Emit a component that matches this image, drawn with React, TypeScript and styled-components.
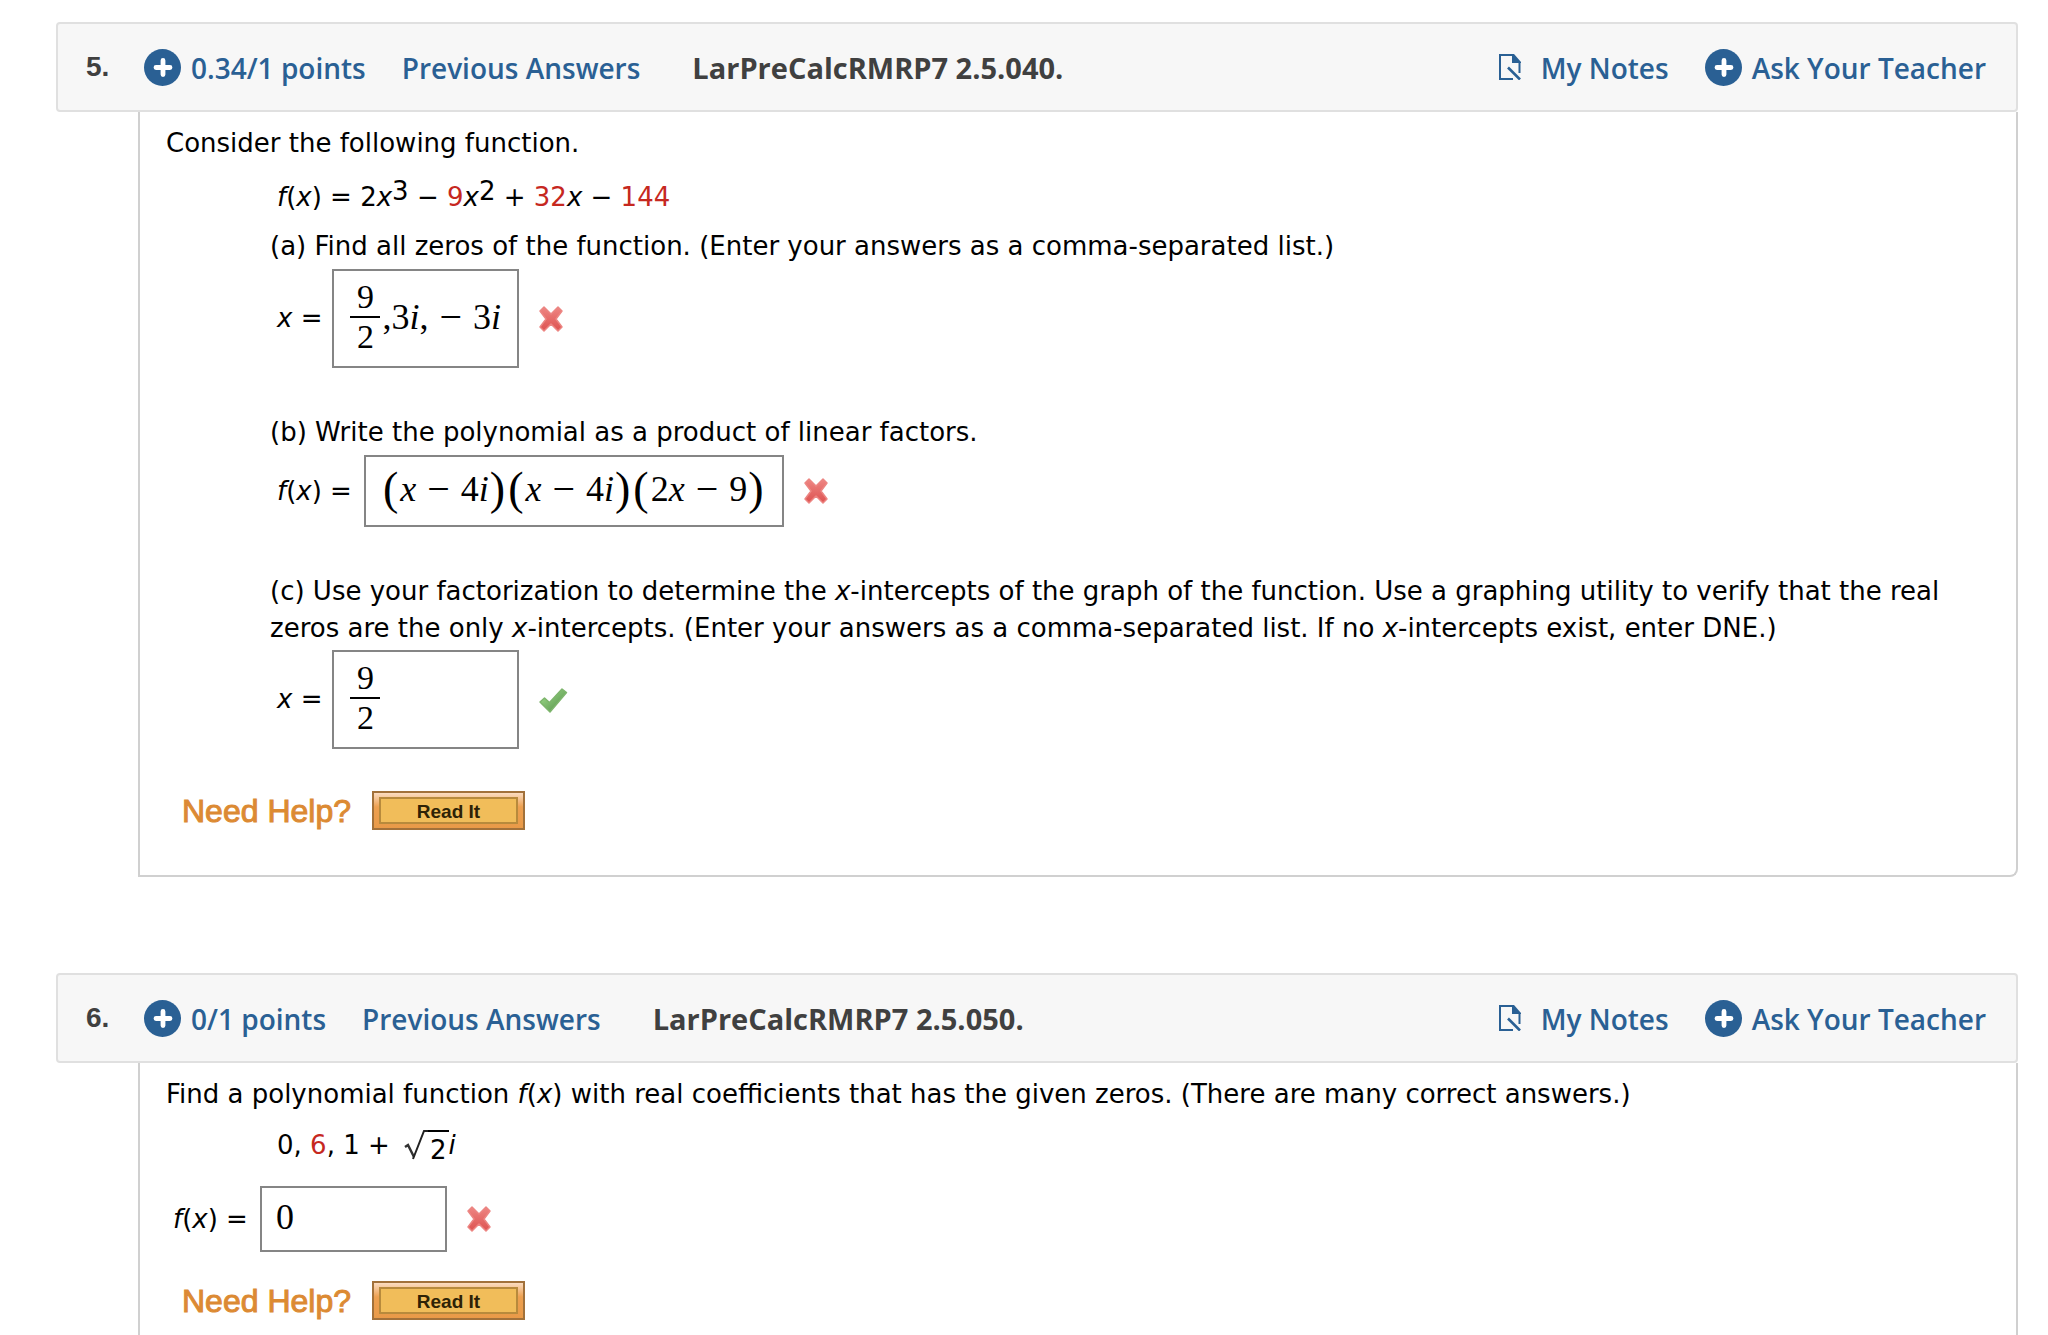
import React from "react";
import styled, { createGlobalStyle } from "styled-components";

const GlobalStyle = createGlobalStyle`
  *, *::before, *::after { box-sizing: border-box; }
  body { margin: 0; background: #fff; color: #000; }
`;

const verdana = `Verdana, "DejaVu Sans", sans-serif`;
const openSans = `"Open Sans", sans-serif`;
const arial = `"Liberation Sans", Arial, sans-serif`;
const times = `"Liberation Serif", "Times New Roman", serif`;

const Page = styled.main`
  display: flex;
  flex-direction: column;
  gap: 96px;
  padding: 22px 30px 40px 56px;
`;

const Question = styled.section`
  display: flex;
  flex-direction: column;
`;

const Header = styled.header`
  display: flex;
  align-items: center;
  height: 90px;
  padding: 0 30px 0 28px;
  border: 2px solid #e0e0e0;
  border-radius: 4px;
  background: #f7f7f7;
  font: 600 28px/40px ${openSans};
  white-space: nowrap;
`;

const Number = styled.span`
  width: 58px;
  font: 700 28px/40px ${arial};
  color: #404040;
`;

const HeaderLink = styled.a<{ $gap?: number }>`
  display: flex;
  align-items: center;
  gap: ${(p) => p.$gap ?? 10}px;
  margin-right: 36px;
  color: #2a6094;
  text-decoration: none;
  &:last-child { margin-right: 0; }
`;

const LinkText = styled.span`
  padding-top: 2px;
`;

const Source = styled.h2`
  flex: 1;
  margin: 0 0 0 16px;
  padding-top: 2px;
  font: 700 29px/40px ${openSans};
  color: #404040;
`;

const Body = styled.div`
  margin-left: 82px;
  padding: 13px 40px 45px 26px;
  border: solid #d0d0d0;
  border-width: 0 2px 2px;
  border-radius: 0 0 8px 0;
  font: 26px/37px ${verdana};
`;

const Text = styled.p<{ $top?: number }>`
  margin: ${(p) => p.$top ?? 0}px 0 0;
`;

const Indent = styled.div`
  padding-left: 104px;
`;

const Formula = styled.p<{ $top: number }>`
  height: 37px;
  margin: ${(p) => p.$top}px 0 0 7px;
  sup { font-size: 26px; line-height: 0; vertical-align: 6px; }
`;

const Red = styled.span`
  color: #c6281f;
`;

const AnswerRow = styled.div<{ $top: number }>`
  display: flex;
  align-items: center;
  margin: ${(p) => p.$top}px 0 0 7px;
`;

const AnswerLabel = styled.label<{ $gap?: number }>`
  margin-right: ${(p) => p.$gap ?? 10}px;
`;

const mathBox = `
  min-width: 187px;
  border: 2px solid #858585;
  background: #fff;
  color: #000;
  font: 36px/44px ${times};
`;

const MathBox = styled.div<{ $height: number }>`
  ${mathBox}
  display: flex;
  align-items: center;
  height: ${(p) => p.$height}px;
  padding: 0 16px 4px;
`;

const MathInput = styled.input`
  ${mathBox}
  width: 187px;
  height: 66px;
  padding: 0 14px 4px;
`;

const Mark = styled.svg`
  margin-left: 18px;
  flex: none;
`;

const Fraction = styled.span`
  display: flex;
  flex-direction: column;
  width: 30px;
  margin-right: 2px;
  text-align: center;
  font-size: 34px;
  line-height: 38px;
`;

const Numerator = styled.span`
  border-bottom: 2px solid #000;
`;

const MathLine = styled.span`
  display: flex;
  align-items: center;
`;

const Minus = styled.span`
  margin: 0 11px;
  font-size: 40px;
`;

const Paren = styled.span`
  margin: 0 2px 0 1px;
  font-size: 46px;
`;

const Root = styled.span`
  display: inline-flex;
  align-items: flex-start;
  margin-left: 6px;
  vertical-align: -14px;
`;

const Radicand = styled.span`
  padding: 0 2px;
  border-top: 2px solid #000;
  line-height: 36px;
`;

const HelpRow = styled.div<{ $top: number }>`
  display: flex;
  align-items: center;
  gap: 18px;
  margin: ${(p) => p.$top}px 0 0 16px;
`;

const HelpTitle = styled.span`
  width: 172px;
  color: #dc8a33;
  font: 32px/36px ${arial};
  white-space: nowrap;
  -webkit-text-stroke: 1px #dc8a33;
`;

const ReadButton = styled.button`
  width: 153px;
  height: 39px;
  padding: 4px 5px;
  border: 2px solid #a2713a;
  background: linear-gradient(#fbdcc0, #eda050 40%, #e99a48);
`;

const ReadFace = styled.span`
  display: block;
  padding-top: 2px;
  border: 2px solid #b88a3c;
  background: #f1bd5a;
  color: #2e2206;
  font: 700 19px/21px ${arial};
`;

const PlusIcon = () => (
  <svg width="37" height="37" viewBox="0 0 37 37" aria-hidden="true">
    <circle cx="18.5" cy="18.5" r="18.5" fill="#2a6094" />
    <path d="M19 11.5v14M12 18.5h14" stroke="#fff" strokeWidth="4.8" strokeLinecap="round" />
  </svg>
);

const NotesIcon = () => (
  <svg width="22" height="26" viewBox="0 0 22 26" aria-hidden="true">
    <path d="M14 25H1V1h13M20.5 8v11" fill="none" stroke="#2a6094" strokeWidth="2" />
    <path d="M13 0h2l7 8v1h-9z" fill="#2a6094" />
    <path d="M9 13.5l12 12" stroke="#2a6094" strokeWidth="2.6" />
  </svg>
);

const Wrong = () => (
  <Mark width="28" height="28" viewBox="0 0 28 28" role="img" aria-label="Incorrect">
    <defs>
      <linearGradient id="wrongFill" x1="0" y1="0" x2="0" y2="1">
        <stop offset="0" stopColor="#ee8683" />
        <stop offset="1" stopColor="#dd5250" />
      </linearGradient>
    </defs>
    <path
      d="M3 6l4-4 7 7 7-7 4 4-6 8 6 8-4 4-7-7-7 7-4-4 6-8z"
      fill="url(#wrongFill)" stroke="#ec8582" strokeWidth="1.5" strokeLinejoin="round"
    />
  </Mark>
);

const Right = () => (
  <Mark width="32" height="28" viewBox="0 0 32 28" role="img" aria-label="Correct">
    <defs>
      <linearGradient id="rightFill" x1="0" y1="0" x2="1" y2="1">
        <stop offset="0.3" stopColor="#8cc97a" />
        <stop offset="0.8" stopColor="#5f9a52" />
      </linearGradient>
    </defs>
    <path d="M3 16l4.500-4 5 4.500L25 3l4.500 3.500L13 26z" fill="url(#rightFill)" stroke="#7db56c" strokeWidth="1.5" strokeLinejoin="round" />
  </Mark>
);

const NineHalves = () => (
  <Fraction>
    <Numerator>9</Numerator>
    <span>2</span>
  </Fraction>
);

const Fx = () => (
  <>
    <i>f</i>(<i>x</i>)
  </>
);

const Group = ({ left, right }: { left: React.ReactNode; right: React.ReactNode }) => (
  <>
    <Paren>(</Paren>
    <span>{left}</span>
    <Minus>−</Minus>
    <span>{right}</span>
    <Paren>)</Paren>
  </>
);

const QuestionHeader = ({ number, points, source }: { number: number; points: string; source: string }) => (
  <Header>
    <Number>{number}.</Number>
    <HeaderLink href="#points"><PlusIcon /><LinkText>{points} points</LinkText></HeaderLink>
    <HeaderLink href="#previous"><LinkText>Previous Answers</LinkText></HeaderLink>
    <Source>{source}</Source>
    <HeaderLink href="#notes" $gap={20}><NotesIcon /><LinkText>My Notes</LinkText></HeaderLink>
    <HeaderLink href="#ask"><PlusIcon /><LinkText>Ask Your Teacher</LinkText></HeaderLink>
  </Header>
);

const NeedHelp = ({ top }: { top: number }) => (
  <HelpRow $top={top}>
    <HelpTitle>Need Help?</HelpTitle>
    <ReadButton type="button"><ReadFace>Read It</ReadFace></ReadButton>
  </HelpRow>
);

export default function App() {
  return (
    <>
      <GlobalStyle />
      <Page>
        <Question>
          <QuestionHeader number={5} points="0.34/1" source="LarPreCalcRMRP7 2.5.040." />
          <Body>
            <Text>Consider the following function.</Text>
            <Indent>
              <Formula $top={17}>
                <Fx /> = 2<i>x</i><sup>3</sup> − <Red>9</Red><i>x</i><sup>2</sup> + <Red>32</Red><i>x</i> − <Red>144</Red>
              </Formula>
              <Text $top={12}>(a) Find all zeros of the function. (Enter your answers as a comma-separated list.)</Text>
              <AnswerRow $top={4}>
                <AnswerLabel id="label-a"><i>x</i> =</AnswerLabel>
                <MathBox $height={99} role="textbox" tabIndex={0} aria-labelledby="label-a">
                  <NineHalves />
                  <MathLine>
                    <span>,3<i>i</i>,</span>
                    <Minus>−</Minus>
                    <span>3<i>i</i></span>
                  </MathLine>
                </MathBox>
                <Wrong />
              </AnswerRow>
              <Text $top={46}>(b) Write the polynomial as a product of linear factors.</Text>
              <AnswerRow $top={4}>
                <AnswerLabel id="label-b" $gap={12}><Fx /> =</AnswerLabel>
                <MathBox $height={72} role="textbox" tabIndex={0} aria-labelledby="label-b">
                  <MathLine>
                    <Group left={<i>x</i>} right={<>4<i>i</i></>} />
                    <Group left={<i>x</i>} right={<>4<i>i</i></>} />
                    <Group left={<>2<i>x</i></>} right="9" />
                  </MathLine>
                </MathBox>
                <Wrong />
              </AnswerRow>
              <Text $top={46}>
                (c) Use your factorization to determine the <i>x</i>-intercepts of the graph of the function. Use a
                graphing utility to verify that the real zeros are the only <i>x</i>-intercepts. (Enter your answers as a
                comma-separated list. If no <i>x</i>-intercepts exist, enter DNE.)
              </Text>
              <AnswerRow $top={3}>
                <AnswerLabel id="label-c"><i>x</i> =</AnswerLabel>
                <MathBox $height={99} role="textbox" tabIndex={0} aria-labelledby="label-c">
                  <NineHalves />
                </MathBox>
                <Right />
              </AnswerRow>
            </Indent>
            <NeedHelp top={42} />
          </Body>
        </Question>

        <Question>
          <QuestionHeader number={6} points="0/1" source="LarPreCalcRMRP7 2.5.050." />
          <Body>
            <Text>
              Find a polynomial function <Fx /> with real coefficients that has the given zeros. (There are many correct
              answers.)
            </Text>
            <Indent>
              <Formula $top={14}>
                0, <Red>6</Red>, 1 +{" "}
                <Root>
                  <svg width="24" height="38" viewBox="0 0 24 38" aria-hidden="true">
                    <path d="M1 17l3-2 6 12" fill="none" stroke="#333" strokeWidth="2.5" />
                    <path d="M9 29L20 1h4" fill="none" stroke="#222" strokeWidth="2" />
                  </svg>
                  <Radicand>2</Radicand>
                </Root>
                <i>i</i>
              </Formula>
            </Indent>
            <AnswerRow $top={22}>
              <AnswerLabel htmlFor="answer-6" $gap={12}><Fx /> =</AnswerLabel>
              <MathInput id="answer-6" type="text" defaultValue="0" />
              <Wrong />
            </AnswerRow>
            <NeedHelp top={29} />
          </Body>
        </Question>
      </Page>
    </>
  );
}
